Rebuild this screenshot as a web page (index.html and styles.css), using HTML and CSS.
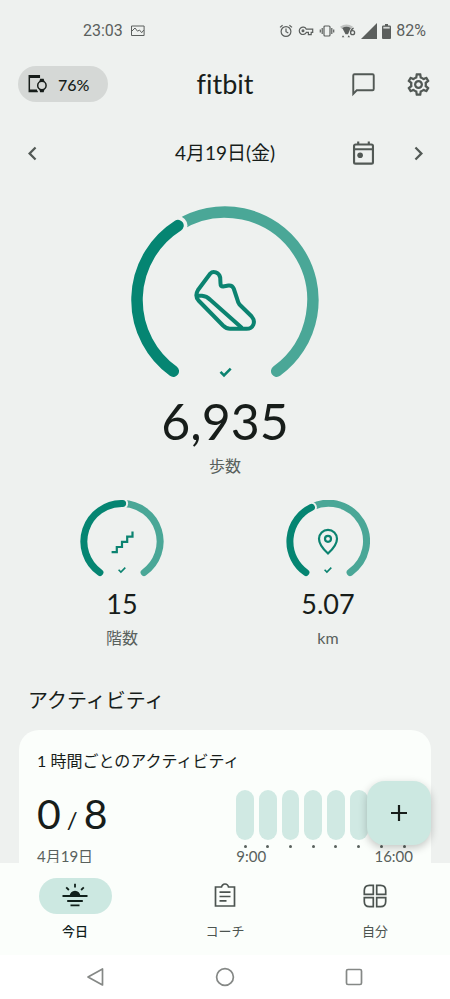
FILE: index.html
```html
<!DOCTYPE html>
<html lang="ja">
<head>
<meta charset="utf-8">
<meta name="viewport" content="width=device-width, initial-scale=1">
<title>fitbit</title>
<link rel="stylesheet" href="styles.css">
</head>
<body>
<div class="status">
  <div class="status-group">
    <span>23:03</span>
    <svg class="status-photo" width="14" height="12" viewBox="0 0 14 12" fill="none" stroke="currentColor"><path d="M.5 1h12.600v9.500H.5zM1 6l3-3 2.500 3.200L8.500 5l2.200 2.700L12.800 5"/></svg>
  </div>
  <div class="status-group status-icons">
    <svg width="14" height="14" viewBox="0 0 14 14" fill="none" stroke="currentColor" stroke-width="1.200"><circle cx="7" cy="7.500" r="4.900"/><path d="M7 4.500v3.200l2.300 1.400M1 3.400L3.600 1.200M13 3.400L10.400 1.200"/></svg>
    <svg width="16" height="14" viewBox="0 0 16 14" fill="none" stroke="currentColor" stroke-width="1.200"><path d="M8.300 5.200h6.400v3.200h-1.500v2.300h-2.800V8.400H8.300a3.700 3.700 0 1 1 0-3.200z"/><circle cx="5" cy="6.800" r=".9" fill="currentColor"/></svg>
    <svg width="16" height="14" viewBox="0 0 16 14" fill="none" stroke="currentColor" stroke-width="1.200"><rect x="5" y="2" width="6" height="10" rx="1"/><path d="M3.200 4v6M12.800 4v6M1.300 5.500v3M14.700 5.500v3"/></svg>
    <svg width="16" height="16" viewBox="0 0 16 16"><path d="M0 3.800Q6.500-1 13 3.800L11 6H2z" fill="#bfc2c0"/><path d="M2.300 5Q6.500 2.500 10.700 5L8 11.200H5.500z" fill="currentColor"/><path d="M3 12.200l1.400 2H1.800zM8.700 12.200l1.400 2H7.500z" fill="currentColor"/><path d="M13.600 5.200Q10.800 6.300 10.600 9.800" fill="none" stroke="currentColor" stroke-width="1.300"/><circle cx="12.600" cy="9.700" r="2" fill="#eef1ef" stroke="currentColor" stroke-width="1.300"/></svg>
    <svg width="16" height="16" viewBox="0 0 16 16" fill="currentColor"><path d="M0 16L16 0v16z"/></svg>
    <svg width="9" height="15" viewBox="0 0 9 15"><path d="M3 0h3v1.500h1.800q1.200 0 1.200 1.200V14q0 1-1 1H1q-1 0-1-1V2.700q0-1.200 1.200-1.200H3z" fill="currentColor"/><path d="M1.300 2.800h6.400v1.800H1.300z" fill="#d5d8d6"/></svg>
    <span>82%</span>
  </div>
</div>

<main class="content">
  <header class="bar">
    <button class="device" type="button">
      <svg width="20" height="20" viewBox="0 0 20 20" fill="none" stroke="currentColor" stroke-width="1.500"><path d="M11.300 4V1.800H1.300v15.700h8.500M1 3.300h10.500M1 16.200h8"/><circle cx="13.900" cy="11.500" r="4.200"/><path d="M12.200 7.200l.5-1.700h2.400l.5 1.700zM12.200 15.800l.5 1.700h2.400l.5-1.700z" fill="currentColor"/></svg>
      <span>76%</span>
    </button>
    <h1 class="brand">fitbit</h1>
    <div class="actions">
      <button class="icon" type="button" aria-label="メッセージ"><svg viewBox="0 0 24 24" fill="none" stroke="currentColor" stroke-width="1.700"><path d="M2.900 20.300V4q0-1.100 1.100-1.100h16q1.100 0 1.100 1.100v12q0 1.100-1.100 1.100H6z"/></svg></button>
      <button class="icon" type="button" aria-label="設定"><svg viewBox="0 0 24 24" fill="currentColor"><path d="M19.430 12.980c.04-.32.070-.64.070-.98 0-.34-.03-.66-.07-.98l2.110-1.650c.19-.15.240-.42.120-.64l-2-3.460c-.09-.16-.26-.25-.44-.25-.06 0-.12.010-.17.030l-2.490 1c-.52-.4-1.080-.73-1.690-.98l-.38-2.650C14.460 2.180 14.250 2 14 2h-4c-.25 0-.46.180-.49.420l-.38 2.650c-.61.250-1.170.590-1.690.98l-2.490-1c-.06-.02-.12-.03-.18-.03-.17 0-.34.090-.43.250l-2 3.460c-.13.220-.07.490.12.640l2.110 1.650c-.04.320-.07.650-.07.980 0 .33.030.66.070.98l-2.110 1.650c-.19.150-.24.420-.12.640l2 3.460c.09.160.26.250.44.250.06 0 .12-.01.17-.03l2.490-1c.52.400 1.080.730 1.690.980l.38 2.650c.03.240.240.420.490.420h4c.25 0 .46-.18.490-.42l.38-2.650c.61-.25 1.170-.59 1.690-.98l2.490 1c.06.020.12.030.18.030.17 0 .34-.09.430-.25l2-3.460c.12-.22.070-.49-.12-.64l-2.110-1.650zm-1.980-1.710c.04.310.050.520.050.730 0 .21-.02.430-.05.730l-.14 1.130.89.700 1.080.840-.7 1.210-1.270-.51-1.040-.42-.9.680c-.43.320-.84.560-1.250.730l-1.060.430-.16 1.130-.2 1.350h-1.400l-.19-1.350-.16-1.130-1.060-.43c-.43-.18-.83-.41-1.230-.71l-.91-.7-1.060.430-1.270.510-.7-1.210 1.080-.84.890-.7-.14-1.130c-.03-.31-.05-.54-.05-.74s.02-.43.050-.73l.14-1.130-.89-.7-1.080-.84.700-1.210 1.270.510 1.040.420.900-.68c.43-.32.840-.56 1.250-.73l1.060-.43.160-1.130.200-1.350h1.390l.19 1.350.16 1.130 1.060.430c.43.180.830.410 1.230.710l.91.700 1.060-.43 1.270-.51.700 1.210-1.070.850-.89.700.14 1.130zM12 8c-2.210 0-4 1.790-4 4s1.790 4 4 4 4-1.790 4-4-1.790-4-4-4zm0 6c-1.100 0-2-.9-2-2s.9-2 2-2 2 .9 2 2-.9 2-2 2z"/></svg></button>
    </div>
  </header>

  <div class="bar dates">
    <button class="icon" type="button" aria-label="前の日"><svg viewBox="0 0 24 24" fill="currentColor"><path d="M15.410 7.410L14 6l-6 6 6 6 1.410-1.410L10.830 12z"/></svg></button>
    <h2 class="date">4月19日(金)</h2>
    <div class="actions">
      <button class="icon" type="button" aria-label="カレンダー"><svg viewBox="0 0 24 24" fill="none" stroke="currentColor" stroke-width="1.900"><rect x="3.600" y="4" width="16.800" height="17" rx="1.300"/><path d="M3.500 8.200h17M7.300 1.400v3M16.700 1.400v3"/><circle cx="9" cy="13.500" r="2.500" fill="currentColor" stroke="none"/></svg></button>
      <button class="icon" type="button" aria-label="次の日"><svg viewBox="0 0 24 24" fill="currentColor"><path d="M10 6L8.590 7.410 13.170 12l-4.580 4.590L10 18l6-6z"/></svg></button>
    </div>
  </div>

  <section class="stat">
    <svg class="ring" width="188" height="176" viewBox="0 0 188 176">
      <g stroke-width="11.500" stroke-linecap="round"><path class="rest" d="M47 19.600A88 88 0 0 1 145.700 165.200"/><circle class="gap" cx="47" cy="19.600" r="9.500"/><path class="done" d="M42.300 165.200A88 88 0 0 1 47 19.600"/></g>
      <g class="mark" stroke-width="4" stroke-linejoin="round"><path d="M79.300 67.500L67 84Q63.500 90 67.500 94.500L92 119.500Q95.500 122.800 99 122.800H115.500C122 122.800 125.500 116 120.500 110.300L108.500 98.500Q107 96.500 106.500 94L102.700 82.500Q101.200 79 97.500 79.500L92 80.500Q89.500 80.500 89.500 77.500L89.200 71.500C88 66 82 64.500 79.300 67.500z"/><path d="M66 89.800H71Q75.500 90 79.500 94L111 122"/></g>
      <path class="mark" stroke-width="2.600" d="M89.500 165.800l3.500 3.500 6.700-6.700"/>
    </svg>
    <strong class="steps">6,935</strong>
    <span class="unit">歩数</span>
  </section>

  <div class="pair">
    <section class="stat">
      <svg class="ring" width="84" height="80" viewBox="0 0 84 80">
        <g stroke-width="7" stroke-linecap="round"><path class="rest" d="M42.600 3.500A38 38 0 0 1 64.100 72.500"/><circle class="gap" cx="42.600" cy="3.500" r="5.500"/><path class="done" d="M19.900 72.500A38 38 0 0 1 42.600 3.500"/></g>
        <path class="mark" stroke-width="2.200" d="M31.600 52.200H36.800V47H42V41.800H47.200V36.600H52.500V31.500"/>
        <path class="mark" stroke-width="1.600" d="M38.600 69.700l2.300 2.300 4.400-4.400"/>
      </svg>
      <strong class="value">15</strong>
      <span class="unit">階数</span>
    </section>
    <section class="stat">
      <svg class="ring" width="84" height="80" viewBox="0 0 84 80">
        <g stroke-width="7" stroke-linecap="round"><path class="rest" d="M25.400 7.300A38 38 0 0 1 64.100 72.500"/><circle class="gap" cx="25.400" cy="7.300" r="5.500"/><path class="done" d="M19.900 72.500A38 38 0 0 1 25.400 7.300"/></g>
        <path class="mark" stroke-width="2.200" d="M42 53.500Q33 45.500 33 38.800A9 9 0 0 1 51 38.800Q51 45.500 42 53.500z"/><circle class="mark" stroke-width="2.200" cx="42" cy="38.800" r="3"/>
        <path class="mark" stroke-width="1.600" d="M38.600 69.700l2.300 2.300 4.400-4.400"/>
      </svg>
      <strong class="value">5.07</strong>
      <span class="unit">km</span>
    </section>
  </div>

  <h2 class="heading">アクティビティ</h2>
  <section class="card">
    <h3 class="card-title">1 時間ごとのアクティビティ</h3>
    <div class="card-body">
      <div>
        <p class="hours"><span>0</span><span class="slash">/</span><span>8</span></p>
        <p class="day">4月19日</p>
      </div>
      <div class="chart">
        <div class="hour-grid"><i></i><i></i><i></i><i></i><i></i><i></i><i></i><i></i></div>
        <div class="axis"><span>9:00</span><span>16:00</span></div>
      </div>
    </div>
  </section>
</main>

<div class="dock">
  <button class="fab" type="button" aria-label="追加"><svg width="18" height="18" viewBox="0 0 18 18" fill="none" stroke="currentColor" stroke-width="2.200"><path d="M9 1v16M1 9h16"/></svg></button>
  <nav class="tabs">
    <a class="tab active" href="#today"><span class="pill"><svg width="26" height="26" viewBox="0 0 26 26" fill="none" stroke="currentColor" stroke-width="1.800"><path d="M.5 13h25M5.200 18h15.600M8.500 22.300h9M13 .8v3.600M4.200 4.300l2.700 2.700M21.800 4.300l-2.700 2.700"/><path d="M7.700 13a5.300 5.300 0 0 1 10.600 0z" fill="currentColor" stroke="none"/></svg></span>今日</a>
    <a class="tab" href="#coach"><span class="pill"><svg width="26" height="26" viewBox="0 0 26 26" fill="none" stroke="currentColor" stroke-width="1.700"><path d="M10 4H3.500v19h19V4H16M7.500 9.200h11M7.500 13.500h11M7.500 17.800h7M9.500 4.500a3.500 3.500 0 0 1 7 0"/></svg></span>コーチ</a>
    <a class="tab" href="#you"><span class="pill"><svg width="26" height="26" viewBox="0 0 26 26" fill="none" stroke="currentColor" stroke-width="1.700"><path d="M11.300 11.300H2.300V7.500Q2.300 2.300 7.500 2.300h3.800zM14.700 11.300h9V7.500q0-5.200-5.200-5.200h-3.800zM11.300 14.700H2.300v3.800q0 5.200 5.200 5.200h3.800zM14.700 14.700h9v3.800q0 5.200-5.200 5.200h-3.800z"/></svg></span>自分</a>
  </nav>
</div>
<div class="system">
  <button type="button" aria-label="戻る"><svg width="20" height="20" viewBox="0 0 20 20" fill="none" stroke="currentColor" stroke-width="1.700" stroke-linejoin="round"><path d="M16.500 2v16L2 10z"/></svg></button>
  <button type="button" aria-label="ホーム"><svg width="20" height="20" viewBox="0 0 20 20" fill="none" stroke="currentColor" stroke-width="1.700"><circle cx="10" cy="10" r="8.400"/></svg></button>
  <button type="button" aria-label="履歴"><svg width="20" height="20" viewBox="0 0 20 20" fill="none" stroke="currentColor" stroke-width="1.700"><rect x="2.500" y="2.500" width="15" height="15" rx="1.500"/></svg></button>
</div>
</body>
</html>
```
FILE: styles.css
```css
* {
  box-sizing: border-box;
  margin: 0;
  padding: 0;
}

body {
  display: flex;
  flex-direction: column;
  height: 100vh;
  background: #eef1ef;
  color: #171d1a;
  font-family: Lato, "Noto Sans CJK JP", sans-serif;
}

button {
  border: 0;
  background: none;
  color: inherit;
  font: inherit;
}

svg {
  display: block;
  flex: none;
}

h1, h2, h3, strong {
  font-weight: 400;
}

.status {
  display: flex;
  flex: none;
  align-items: center;
  justify-content: space-between;
  height: 62px;
  padding: 0 24px 0 83px;
  color: #5b5f5d;
  font: 16px/20px Roboto, sans-serif;
}

.status-group {
  display: flex;
  align-items: center;
  gap: 8px;
}

.status-icons {
  gap: 5px;
}

.content {
  flex: 1;
  min-height: 0;
  overflow: hidden;
}

.bar {
  display: grid;
  grid-template-columns: 1fr auto 1fr;
  align-items: center;
  height: 44px;
  padding: 0 18px;
}

.dates {
  margin: 25px 0 31px;
}

.device {
  display: flex;
  justify-self: start;
  align-items: center;
  gap: 10px;
  height: 36px;
  padding: 0 19px 0 10px;
  border-radius: 18px;
  background: #d5d8d6;
  font-size: 16px;
  font-weight: 500;
}

.brand {
  font-size: 27px;
  line-height: 32px;
  font-variant-ligatures: none;
}

.date {
  font-size: 19px;
  line-height: 24px;
}

.actions {
  display: flex;
  justify-self: end;
  gap: 27px;
}

.icon {
  display: grid;
  place-items: center;
  width: 28px;
  height: 28px;
  color: #525955;
}

.icon svg {
  width: 27px;
  height: 27px;
}

.stat {
  display: flex;
  flex-direction: column;
  align-items: center;
}

.ring {
  fill: none;
}

.rest {
  stroke: #4aa797;
}

.gap {
  fill: #eef1ef;
}

.done {
  stroke: #058572;
}

.mark {
  fill: none;
  stroke: #0b8370;
}

.steps {
  margin: 8px 0 2px;
  font-size: 50px;
  line-height: 62px;
}

.unit {
  color: #59615d;
  font-size: 16px;
  line-height: 24px;
}

.pair {
  display: grid;
  grid-template-columns: 1fr 1fr;
  margin-top: 22px;
  padding: 0 19px;
}

.value {
  margin: 8px 0 6px;
  font-size: 27px;
  line-height: 32px;
}

.heading {
  margin: 36px 28px 16px;
  font-size: 20px;
  line-height: 28px;
}

.card {
  margin: 0 19px;
  padding: 19px 18px;
  border-radius: 20px;
  background: #fbfefb;
}

.card-title {
  font-size: 16px;
  line-height: 24px;
}

.card-body {
  display: flex;
  justify-content: space-between;
  margin-top: 17px;
}

.hours {
  display: flex;
  align-items: baseline;
  gap: 6px;
  font-size: 41px;
  line-height: 48px;
}

.slash {
  font-size: 24px;
}

.day,
.axis {
  color: #59615d;
  font-size: 15px;
  line-height: 16px;
}

.day {
  margin-top: 4px;
}

.chart {
  width: 47%;
}

.hour-grid {
  display: grid;
  grid-template-columns: repeat(8, 1fr);
  gap: 5px;
}

.hour-grid i::before {
  content: "";
  display: block;
  height: 50px;
  border-radius: 9px;
  background: #d0e9e3;
}

.hour-grid i::after {
  content: "";
  display: block;
  width: 3px;
  height: 3px;
  margin: 5px auto 0;
  border-radius: 2px;
  background: #59615d;
}

.axis {
  display: flex;
  justify-content: space-between;
}

.dock {
  position: relative;
  flex: none;
  background: #fbfefb;
}

.fab {
  position: absolute;
  right: 19px;
  bottom: calc(100% + 18px);
  display: grid;
  place-items: center;
  width: 64px;
  height: 64px;
  border-radius: 18px;
  background: #cce8e1;
  box-shadow: 0 3px 8px rgb(0 0 0 / 22%);
}

.tabs {
  display: grid;
  grid-template-columns: repeat(3, 1fr);
  height: 92px;
  padding-top: 15px;
}

.tab {
  display: flex;
  flex-direction: column;
  align-items: center;
  gap: 8px;
  color: #4c5450;
  font-size: 13px;
  line-height: 18px;
  text-decoration: none;
}

.pill {
  display: grid;
  place-items: center;
  width: 73px;
  height: 36px;
  border-radius: 18px;
}

.active {
  color: #10201b;
  font-weight: 500;
}

.active .pill {
  background: #cce8e1;
}

.system {
  display: grid;
  flex: none;
  grid-template-columns: repeat(3, 1fr);
  place-items: center;
  height: 44px;
  padding: 0 31px;
  background: #fff;
  color: #858886;
}
```
